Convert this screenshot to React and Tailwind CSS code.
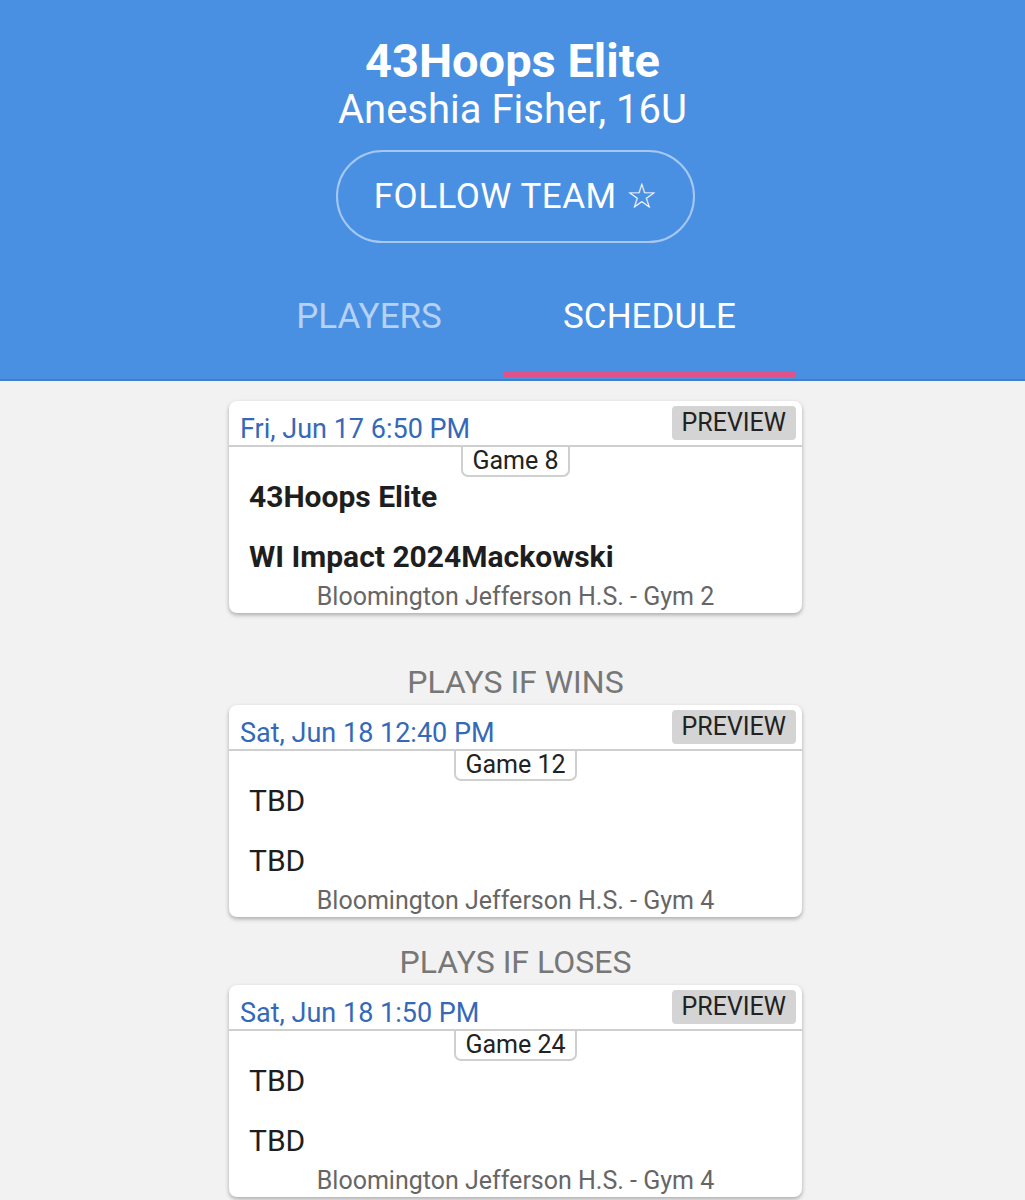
import React from 'react';

const games = [
  {
    label: null,
    date: 'Fri, Jun 17 6:50 PM',
    game: 'Game 8',
    teams: ['43Hoops Elite', 'WI Impact 2024Mackowski'],
    bold: true,
    location: 'Bloomington Jefferson H.S. - Gym 2',
  },
  {
    label: 'PLAYS IF WINS',
    date: 'Sat, Jun 18 12:40 PM',
    game: 'Game 12',
    teams: ['TBD', 'TBD'],
    bold: false,
    location: 'Bloomington Jefferson H.S. - Gym 4',
  },
  {
    label: 'PLAYS IF LOSES',
    date: 'Sat, Jun 18 1:50 PM',
    game: 'Game 24',
    teams: ['TBD', 'TBD'],
    bold: false,
    location: 'Bloomington Jefferson H.S. - Gym 4',
  },
];

function GameCard({ game }) {
  return (
    <div className="w-[573px] bg-white rounded-[8px] shadow-[0_2px_4px_rgba(0,0,0,0.3)] overflow-hidden">
      <div className="flex items-start justify-between h-[46px] border-b-2 border-[#cfcfcf]">
        <div className="pl-[11px] pt-[12px] text-[27px] leading-[32px] text-[#3569b8]">
          {game.date}
        </div>
        <div className="mt-[5px] mr-[6px] h-[34px] px-[10px] rounded-[4px] bg-[#d4d4d4] text-[25px] leading-[34px] text-[#222]">
          PREVIEW
        </div>
      </div>
      <div className="flex justify-center">
        <div className="h-[30px] px-[9px] border-2 border-t-0 border-[#cfcfcf] rounded-b-[7px] text-[25px] leading-[28px] text-[#222]">
          {game.game}
        </div>
      </div>
      <div
        className={`h-[40px] pl-[20px] text-[30px] leading-[40px] text-[#1e1e1e] ${game.bold ? 'font-bold' : ''}`}
      >
        {game.teams[0]}
      </div>
      <div
        className={`mt-[20px] h-[40px] pl-[20px] text-[30px] leading-[40px] text-[#1e1e1e] ${game.bold ? 'font-bold' : ''}`}
      >
        {game.teams[1]}
      </div>
      <div className="mt-[3px] h-[33px] text-center text-[25px] leading-[34px] text-[#666]">
        {game.location}
      </div>
    </div>
  );
}

export default function App() {
  return (
    <div className="min-h-[1200px] bg-[#f2f2f2] font-['Roboto',sans-serif]">
      <div className="bg-[#4a90e2] border-b-2 border-[#3f7fcc] h-[381px] flex flex-col items-center">
        <h1 className="mt-[35px] text-[47px] leading-[52px] font-bold text-white">43Hoops Elite</h1>
        <div className="text-[40px] leading-[46px] text-white">Aneshia Fisher, 16U</div>
        <button className="mt-[17px] ml-[6px] w-[359px] h-[93px] rounded-full border-2 border-white/50 text-white text-[35px] leading-[40px] tracking-[0.5px]">
          FOLLOW TEAM ☆
        </button>
        <div className="mt-[34px] flex w-full justify-center pl-[4px]">
          <div className="w-[270px] h-[100px] flex justify-center pt-[20px] text-[35px] leading-[40px] text-white/60">
            PLAYERS
          </div>
          <div className="w-[291px] h-[100px] flex flex-col items-center justify-between pt-[20px] text-[35px] leading-[40px] text-white">
            <span>SCHEDULE</span>
            <div className="w-full h-[6px] bg-[#e0528a]" />
          </div>
        </div>
      </div>

      <div className="flex flex-col items-center pl-[6px] pt-[20px] pb-[10px]">
        {games.map((g, i) => (
          <React.Fragment key={i}>
            {g.label && (
              <div
                className={`${i === 1 ? 'mt-[50px]' : 'mt-[26px]'} mb-[4px] h-[38px] text-[32px] leading-[38px] text-[#777]`}
              >
                {g.label}
              </div>
            )}
            <GameCard game={g} />
          </React.Fragment>
        ))}
      </div>
    </div>
  );
}
